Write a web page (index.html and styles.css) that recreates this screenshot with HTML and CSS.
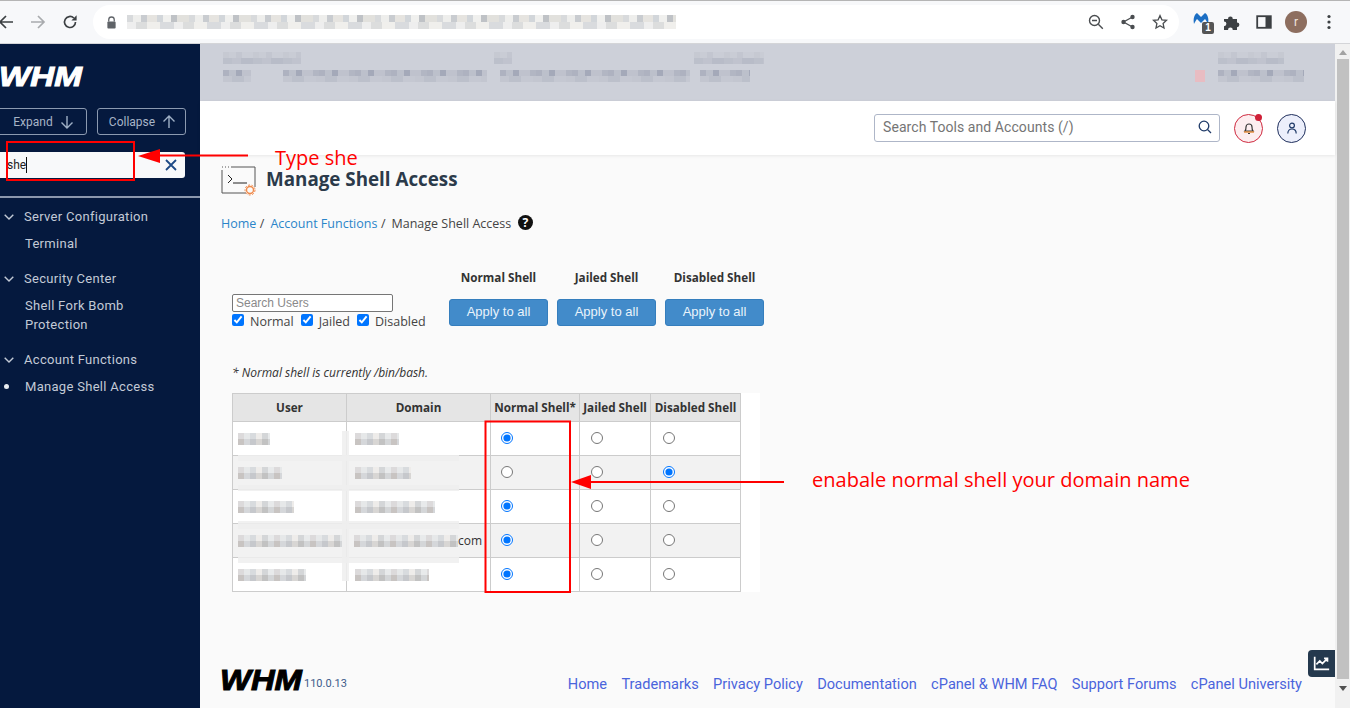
FILE: index.html
```html
<!DOCTYPE html>
<html lang="en">
<head>
<meta charset="UTF-8">
<title>Manage Shell Access</title>
<link rel="stylesheet" href="styles.css">
</head>
<body>
<div id="browserBar">
    <svg class="navIcon first" viewBox="0 0 16 16"><path d="M15 8H2M8 2L2 8l6 6" fill="none" stroke="#3c4043" stroke-width="1.7"/></svg>
    <svg class="navIcon" viewBox="0 0 16 16"><path d="M1 8h13M8 2l6 6-6 6" fill="none" stroke="#a9abae" stroke-width="1.7"/></svg>
    <svg class="navIcon" viewBox="0 0 16 16"><path d="M13.5 8a5.5 5.5 0 1 1-1.7-4" fill="none" stroke="#3c4043" stroke-width="1.7"/><path d="M14.6 1.2v5.2H9.4z" fill="#3c4043"/></svg>
    <div id="addressBar">
        <svg class="lock" viewBox="0 0 12 14"><path d="M3 6V4a3 3 0 0 1 6 0v2" fill="none" stroke="#5f6368" stroke-width="1.4"/><rect x="1.5" y="6" width="9" height="7.5" rx="1" fill="#5f6368"/></svg>
        <div class="urlBlur"></div>
        <svg class="barIcon" viewBox="0 0 16 16"><circle cx="6.5" cy="6.5" r="5" fill="none" stroke="#4a4d50" stroke-width="1.4"/><path d="M4 6.5h5M10.3 10.3l4.5 4.5" stroke="#4a4d50" stroke-width="1.4"/></svg>
        <svg class="barIcon" viewBox="0 0 16 16"><path d="M12.5 3L3.5 8l9 5" fill="none" stroke="#4a4d50" stroke-width="1.3"/><circle cx="12.5" cy="3" r="2.2" fill="#4a4d50"/><circle cx="3.5" cy="8" r="2.2" fill="#4a4d50"/><circle cx="12.5" cy="13" r="2.2" fill="#4a4d50"/></svg>
        <svg class="barIcon" viewBox="0 0 16 16"><path d="M8 1.6l1.9 4.2 4.6.5-3.4 3.1.9 4.6L8 11.7l-4 2.3.9-4.6-3.4-3.1 4.6-.5z" fill="none" stroke="#4a4d50" stroke-width="1.3"/></svg>
    </div>
    <div id="extBox">
        <svg class="malware" viewBox="0 0 16 14"><path d="M1 12C0 7 1 3 4 1l4 4 4-4c3 2 4 6 3 11-1-2-2-4-3-5l-4 4-4-4c-1 1-2 3-3 5z" fill="#1c6fc4"/></svg>
        <span class="extBadge">1</span>
    </div>
    <svg class="extIcon" viewBox="0 0 16 16"><path d="M0 5h4a2.400 2.400 0 1 1 4.800 0H13v3.400a2.400 2.400 0 1 1 0 4.800V16H8.800a2.400 2.400 0 1 0-4.800 0H0v-3.800a2.400 2.400 0 1 0 0-4.800z" fill="#3c4043"/></svg>
    <svg class="extIcon" viewBox="0 0 16 16"><rect x="1.2" y="2.2" width="13.6" height="11.6" fill="none" stroke="#3c4043" stroke-width="1.8"/><rect x="9.5" y="2.2" width="5.3" height="11.6" fill="#3c4043"/></svg>
    <span class="avatar">r</span>
    <svg class="extIcon" viewBox="0 0 16 16"><circle cx="8" cy="2.5" r="1.6" fill="#3c4043"/><circle cx="8" cy="8" r="1.6" fill="#3c4043"/><circle cx="8" cy="13.5" r="1.6" fill="#3c4043"/></svg>
</div>

<div id="page">
    <div id="sidebar">
        <div class="logo">WHM</div>
        <div class="btnRow">
            <button class="sideBtn expand">Expand
                <svg viewBox="0 0 14 14"><path d="M7 1v12M1.5 7.5L7 13l5.500-5.500" fill="none" stroke="#9fb0c6" stroke-width="1.4"/></svg>
            </button>
            <button class="sideBtn collapse">Collapse
                <svg viewBox="0 0 14 14"><path d="M7 13V1M1.5 6.5L7 1l5.500 5.500" fill="none" stroke="#9fb0c6" stroke-width="1.4"/></svg>
            </button>
        </div>
        <div class="sideSearch">
            <span class="sideValue">she</span>
            <svg viewBox="0 0 12 12"><path d="M1 1l10 10M11 1L1 11" stroke="#1d4a86" stroke-width="1.8"/></svg>
        </div>
        <ul class="sideNav">
            <li class="navHead"><svg viewBox="0 0 10 6"><path d="M.7.7L5 5 9.3.7" fill="none" stroke="#c3cad6" stroke-width="1.4"/></svg>Server Configuration</li>
            <li class="navItem">Terminal</li>
            <li class="navHead"><svg viewBox="0 0 10 6"><path d="M.7.7L5 5 9.3.7" fill="none" stroke="#c3cad6" stroke-width="1.4"/></svg>Security Center</li>
            <li class="navItem">Shell Fork Bomb Protection</li>
            <li class="navHead"><svg viewBox="0 0 10 6"><path d="M.7.7L5 5 9.3.7" fill="none" stroke="#c3cad6" stroke-width="1.4"/></svg>Account Functions</li>
            <li class="navItem active">Manage Shell Access</li>
        </ul>
    </div>

    <div id="main">
        <div id="infoBand">
            <div class="infoGroup g1">
                <div class="blur dim b78"></div>
                <div class="infoRow"><div class="blur b28"></div><div class="blur b204"></div></div>
            </div>
            <div class="infoGroup g2">
                <div class="blur dim b18"></div>
                <div class="blur b190 shift6"></div>
            </div>
            <div class="infoGroup g3">
                <div class="blur dim b70"></div>
                <div class="blur b50 shift6"></div>
            </div>
            <div class="infoGroup g4">
                <div class="blur dim b66 shift23"></div>
                <div class="infoRow"><div class="pinkDot"></div><div class="blur b86"></div></div>
            </div>
        </div>
        <div id="topBar">
            <div class="topSearch">
                <span>Search Tools and Accounts (/)</span>
                <svg viewBox="0 0 14 14"><circle cx="6" cy="6" r="4.8" fill="none" stroke="#1f3a68" stroke-width="1.3"/><path d="M9.5 9.5L13 13" stroke="#1f3a68" stroke-width="1.3"/></svg>
            </div>
            <div class="roundBtn bell">
                <svg viewBox="0 0 14 14"><path d="M3 10c1-1 1-2 1-4a3 3 0 0 1 6 0c0 2 0 3 1 4z" fill="none" stroke="#3a3a3a" stroke-width="1.2"/><path d="M2 11h10" stroke="#e07b1a" stroke-width="1.2"/><path d="M6 12.5h2" stroke="#3a3a3a" stroke-width="1.2"/></svg>
                <span class="redDot"></span>
            </div>
            <div class="roundBtn user">
                <svg viewBox="0 0 14 14"><circle cx="7" cy="4.5" r="2.4" fill="none" stroke="#1f3a68" stroke-width="1.2"/><path d="M2.8 12.5c0-3 1.800-4.500 4.200-4.500s4.200 1.500 4.200 4.500" fill="none" stroke="#1f3a68" stroke-width="1.2"/></svg>
            </div>
        </div>

        <div id="content">
            <div class="titleRow">
                <svg class="titleIcon" viewBox="0 0 36 32">
                    <path d="M1 3h1M4 3h1M7 3h1M10 3h24v20M1 6v23h24" fill="none" stroke="#555" stroke-width="1"/>
                    <path d="M7 11l4 4-4 4M12 19h14" fill="none" stroke="#222" stroke-width="1"/>
                    <circle cx="29" cy="26" r="3.500" fill="none" stroke="#f08a4b" stroke-width="1.400"/>
                    <circle cx="29" cy="26" r="5" fill="none" stroke="#f08a4b" stroke-width="1" stroke-dasharray="2 1.500"/>
                </svg>
                <h1>Manage Shell Access</h1>
            </div>
            <div class="crumbs">
                <a>Home</a><span class="sep">/</span><a>Account Functions</a><span class="sep">/</span><span>Manage Shell Access</span>
                <svg class="helpIcon" viewBox="0 0 16 16"><circle cx="8" cy="8" r="8" fill="#111"/><text x="8" y="12.800" text-anchor="middle" class="helpMark">?</text></svg>
            </div>

            <div class="controls">
                <div class="filterBox">
                    <input class="userSearch" type="text" placeholder="Search Users">
                    <div class="filterChecks">
                        <label><input type="checkbox" checked>Normal</label>
                        <label><input type="checkbox" checked>Jailed</label>
                        <label><input type="checkbox" checked>Disabled</label>
                    </div>
                </div>
                <div class="applyCol"><b>Normal Shell</b><button class="applyBtn">Apply to all</button></div>
                <div class="applyCol"><b>Jailed Shell</b><button class="applyBtn">Apply to all</button></div>
                <div class="applyCol"><b>Disabled Shell</b><button class="applyBtn">Apply to all</button></div>
            </div>

            <p class="note">* Normal shell is currently /bin/bash.</p>

            <div class="tableWrap">
                <table class="shellTable">
                    <thead>
                        <tr><th class="colUser">User</th><th class="colDomain">Domain</th><th class="colNormal">Normal Shell*</th><th class="colJailed">Jailed Shell</th><th class="colDisabled">Disabled Shell</th></tr>
                    </thead>
                    <tbody>
                        <tr>
                            <td><div class="blur cell b32"></div></td>
                            <td class="dom"><div class="blur cell b44"></div></td>
                            <td class="rNormal"><input type="radio" name="r1" checked></td>
                            <td class="rJailed"><input type="radio" name="r1"></td>
                            <td class="rDisabled"><input type="radio" name="r1"></td>
                        </tr>
                        <tr>
                            <td><div class="blur cell b44"></div></td>
                            <td class="dom"><div class="blur cell b56"></div></td>
                            <td class="rNormal"><input type="radio" name="r2"></td>
                            <td class="rJailed"><input type="radio" name="r2"></td>
                            <td class="rDisabled"><input type="radio" name="r2" checked></td>
                        </tr>
                        <tr>
                            <td><div class="blur cell b56"></div></td>
                            <td class="dom"><div class="blur cell b80"></div></td>
                            <td class="rNormal"><input type="radio" name="r3" checked></td>
                            <td class="rJailed"><input type="radio" name="r3"></td>
                            <td class="rDisabled"><input type="radio" name="r3"></td>
                        </tr>
                        <tr>
                            <td><div class="blur cell b104"></div></td>
                            <td class="dom"><div class="domWrap"><div class="blur cell b104"></div><span>com</span></div></td>
                            <td class="rNormal"><input type="radio" name="r4" checked></td>
                            <td class="rJailed"><input type="radio" name="r4"></td>
                            <td class="rDisabled"><input type="radio" name="r4"></td>
                        </tr>
                        <tr>
                            <td><div class="blur cell b68"></div></td>
                            <td class="dom"><div class="blur cell b74"></div></td>
                            <td class="rNormal"><input type="radio" name="r5" checked></td>
                            <td class="rJailed"><input type="radio" name="r5"></td>
                            <td class="rDisabled"><input type="radio" name="r5"></td>
                        </tr>
                    </tbody>
                </table>
                <div class="smear h1"></div>
                <div class="smear h2"></div>
                <div class="smear h3"></div>
                <div class="smear h4"></div>
                <div class="smear v1"></div>
            </div>

            <div id="footer">
                <div class="footLogo"><span class="logoDark">WHM</span><span class="version">110.0.13</span></div>
                <div class="footLinks">
                    <a>Home</a><a>Trademarks</a><a>Privacy Policy</a><a>Documentation</a><a>cPanel &amp; WHM FAQ</a><a>Support Forums</a><a>cPanel University</a>
                </div>
            </div>
            <div class="statBtn">
                <svg viewBox="0 0 20 18"><path d="M2 1v15h17" fill="none" stroke="#fff" stroke-width="2"/><path d="M4 10l4-4 3 3 6-6M13 3h4v4" fill="none" stroke="#fff" stroke-width="2"/></svg>
            </div>
        </div>
    </div>

    <div id="scrollbar">
        <span class="arrowUp"></span>
        <div class="thumb"></div>
        <span class="arrowDown"></span>
    </div>
</div>

<svg id="marks" viewBox="0 0 1350 708">
    <rect x="7" y="142" width="127" height="38" fill="none" stroke="#f00" stroke-width="2"/>
    <path d="M160 155.500H248" stroke="#f00" stroke-width="2"/>
    <path d="M138 156l22-7v14z" fill="#f00"/>
    <text x="275" y="165" class="markText">Type she</text>
    <rect x="485.500" y="421.500" width="84.500" height="170.500" fill="none" stroke="#f00" stroke-width="2"/>
    <path d="M590 482H784" stroke="#f00" stroke-width="2"/>
    <path d="M571 482l20-7v14z" fill="#f00"/>
    <text x="812" y="487" class="markText">enabale normal shell your domain name</text>
</svg>
</body>
</html>
```

FILE: styles.css
```css
*{
    box-sizing: border-box;
}
html, body{
    margin: 0;
    padding: 0;
    height: 708px;
    overflow: hidden;
    background-color: #fafafa;
}
body{
    font-family: "Open Sans", sans-serif;
    position: relative;
}

/* browser chrome */
#browserBar{
    height: 44px;
    background-color: #f7f8fa;
    border-top: 1px solid #b5b5b5;
    border-bottom: 1px solid #d4d5d8;
    display: flex;
    align-items: center;
}
.navIcon{
    width: 16px;
    height: 16px;
    margin-right: 16px;
    flex-shrink: 0;
}
.navIcon.first{
    margin-left: -2px;
}
.navIcon + .navIcon + .navIcon{
    margin-right: 15px;
}
#addressBar{
    width: 1086px;
    height: 34px;
    background-color: #fff;
    border-radius: 17px;
    display: flex;
    align-items: center;
    padding-left: 13px;
    flex-shrink: 0;
}
.lock{
    width: 11px;
    height: 13px;
    margin-right: 10px;
    flex-shrink: 0;
}
.urlBlur{
    width: 549px;
    height: 14px;
    margin-right: 412px;
    flex-shrink: 0;
    background-image:
        repeating-linear-gradient(90deg, #d8dadc 0 6px, #eeeeec 6px 14px, #c9ccd0 14px 20px, #e6e4e0 20px 30px, #d2d6da 30px 36px, #f0f0ee 36px 44px, #bfc2c6 44px 50px, #e2e1dd 50px 62px),
        repeating-linear-gradient(90deg, #eeeeee 0 9px, #dcdddd 9px 20px, #f0efec 20px 33px, #d9dbde 33px 47px);
    background-size: 100% 7px, 100% 7px;
    background-position: 0 0, 0 7px;
    background-repeat: no-repeat;
}
.barIcon{
    width: 16px;
    height: 16px;
    margin-right: 16px;
    flex-shrink: 0;
}
#extBox{
    position: relative;
    width: 24px;
    height: 24px;
    margin-left: 14px;
    margin-right: 4px;
    flex-shrink: 0;
}
.malware{
    width: 16px;
    height: 14px;
    position: absolute;
    top: 2px;
    left: 0;
}
.extBadge{
    position: absolute;
    left: 9px;
    top: 12px;
    width: 12px;
    height: 12px;
    background-color: #555;
    color: #fff;
    border-radius: 2px;
    font: bold 10px/12px "Liberation Sans", sans-serif;
    text-align: center;
}
.extIcon{
    width: 16px;
    height: 16px;
    margin-left: 3px;
    margin-right: 13px;
    flex-shrink: 0;
}
.avatar{
    width: 22px;
    height: 22px;
    border-radius: 50%;
    background-color: #8d6e5f;
    color: #f1e6e0;
    font: 12px/22px "Roboto", sans-serif;
    text-align: center;
    margin-right: 11px;
    flex-shrink: 0;
}

#page{
    height: 664px;
    display: flex;
}

/* left menu */
#sidebar{
    width: 200px;
    flex-shrink: 0;
    background-color: #05193e;
    color: #c3cad6;
    font-family: "Roboto", sans-serif;
}
.logo{
    font: italic 900 27px/28px "Liberation Sans", sans-serif;
    color: #fff;
    -webkit-text-stroke: 1px #fff;
    transform: scaleX(1.230);
    transform-origin: left;
    margin: 19px 0 17px -1px;
    height: 28px;
}
.btnRow{
    display: flex;
    gap: 10px;
    margin-left: -10px;
}
.sideBtn{
    height: 27px;
    background: transparent;
    border: 1px solid #8c9ab0;
    border-radius: 3px;
    color: #a7b4c6;
    font: 12px "Roboto", sans-serif;
    display: flex;
    align-items: center;
    justify-content: center;
    gap: 7px;
    padding: 0;
}
.sideBtn svg{
    width: 14px;
    height: 14px;
}
.expand{
    width: 97px;
    padding-left: 10px;
}
.collapse{
    width: 89px;
    padding-left: 2px;
}
.sideSearch{
    width: 185px;
    height: 26px;
    margin-top: 17px;
    background-color: #f8f9fa;
    border-radius: 0 3px 3px 0;
    display: flex;
    align-items: center;
    justify-content: space-between;
    padding: 0 8px 0 7px;
}
.sideValue{
    color: #222;
    font: 12px "Roboto", sans-serif;
    border-right: 1px solid #111;
    line-height: 16px;
    padding-right: 0;
}
.sideSearch svg{
    width: 12px;
    height: 12px;
}
.sideNav{
    list-style: none;
    margin: 18px 0 0;
    padding: 9px 20px 0 0;
    border-top: 2px solid #8b97ad;
    font-size: 13px;
    letter-spacing: 0.3px;
}
.navHead{
    display: flex;
    align-items: center;
    height: 19px;
    padding-left: 4px;
}
.navHead svg{
    width: 10px;
    height: 6px;
    margin-right: 10px;
}
.navItem{
    padding-left: 25px;
    line-height: 19px;
    margin: 8px 0 16px;
    position: relative;
}
.navItem.active::before{
    content: "";
    position: absolute;
    left: 4px;
    top: 7px;
    width: 5px;
    height: 5px;
    border-radius: 50%;
    background-color: #e8ebf0;
}

/* main column */
#main{
    flex: 1;
    min-width: 0;
    display: flex;
    flex-direction: column;
}
#infoBand{
    height: 57px;
    background-color: #cdd0d9;
    display: flex;
    padding: 8px 0 0 23px;
}
.infoGroup{
    display: flex;
    flex-direction: column;
    gap: 6px;
}
.infoRow{
    display: flex;
    gap: 32px;
}
.g1{
    width: 271px;
}
.g2{
    width: 200px;
}
.g3{
    width: 501px;
}
.g4{
    width: 130px;
}
.g4 .infoRow{
    gap: 13px;
}
.shift6{
    margin-left: 6px;
}
.shift23{
    margin-left: 23px;
}
.pinkDot{
    width: 10px;
    height: 12px;
    background-color: #e8bcc2;
}
.blur{
    height: 12px;
    background-image:
        repeating-linear-gradient(90deg, #aeb2c0 0 6px, #bcc0cb 6px 13px, #a4a9b9 13px 19px, #bfc2cd 19px 30px, #b2b6c3 30px 36px),
        repeating-linear-gradient(90deg, #c3c6d0 0 9px, #bcc0cb 9px 21px, #c5c8d2 21px 33px);
    background-size: 100% 6px, 100% 6px;
    background-position: 0 0, 0 6px;
    background-repeat: no-repeat;
}
.blur.dim{
    background-image:
        repeating-linear-gradient(90deg, #c6c9d2 0 6px, #c9ccd5 6px 13px, #c3c6d0 13px 19px, #cacdd6 19px 30px),
        repeating-linear-gradient(90deg, #bcc0cb 0 9px, #c0c3ce 9px 18px, #b8bcc8 18px 30px);
}
.blur.cell{
    background-image:
        repeating-linear-gradient(90deg, #dcdadb 0 6px, #e6e8e9 6px 12px, #d8dbde 12px 18px, #eeecea 18px 24px, #d4d6d8 24px 30px, #e8eaeb 30px 36px),
        repeating-linear-gradient(90deg, #c8c4c2 0 6px, #d5d7da 6px 12px, #c6c8cc 12px 18px, #d8d6d4 18px 24px, #c2c2c2 24px 30px, #d4d6d8 30px 36px);
}
.b18{ width: 18px; }
.b28{ width: 28px; }
.b32{ width: 32px; }
.b44{ width: 44px; }
.b50{ width: 50px; }
.b56{ width: 56px; }
.b66{ width: 66px; }
.b68{ width: 68px; }
.b70{ width: 70px; }
.b74{ width: 74px; }
.b78{ width: 78px; }
.b80{ width: 80px; }
.b86{ width: 86px; }
.b104{ width: 104px; }
.b190{ width: 190px; }
.b204{ width: 204px; }

#topBar{
    height: 54px;
    background-color: #fff;
    box-shadow: 0 1px 3px rgba(0,0,0,0.08);
    display: flex;
    align-items: center;
    justify-content: flex-end;
    padding-right: 29px;
    flex-shrink: 0;
    position: relative;
}
.topSearch{
    width: 346px;
    height: 28px;
    border: 1px solid #aeb6c8;
    border-radius: 3px;
    display: flex;
    align-items: center;
    justify-content: space-between;
    padding: 0 7px 2px 8px;
    font: 14px "Roboto", sans-serif;
    letter-spacing: 0.07px;
    color: #757575;
    margin-right: 14px;
}
.topSearch svg{
    width: 14px;
    height: 14px;
}
.roundBtn{
    width: 29px;
    height: 29px;
    border-radius: 50%;
    display: flex;
    align-items: center;
    justify-content: center;
    position: relative;
}
.roundBtn svg{
    width: 14px;
    height: 14px;
}
.bell{
    background-color: #fdeef0;
    border: 1px solid #cf2a3f;
    margin-right: 14px;
}
.user{
    background-color: #eceffb;
    border: 1px solid #1f2f5c;
}
.redDot{
    position: absolute;
    top: -1px;
    right: 0;
    width: 7px;
    height: 7px;
    border-radius: 50%;
    background-color: #cf1f37;
}

/* page content */
#content{
    flex: 1;
    padding-left: 21px;
    position: relative;
    min-height: 0;
}
.titleRow{
    display: flex;
    align-items: center;
    height: 32px;
    margin-top: 8px;
}
.titleIcon{
    width: 36px;
    height: 32px;
    margin-right: 9px;
    margin-top: 2px;
}
h1{
    margin: 0;
    font-size: 18.800px;
    font-weight: 700;
    color: #2b3a4a;
}
.crumbs{
    display: flex;
    align-items: center;
    font-size: 12.500px;
    color: #444;
    margin-top: 18px;
    height: 20px;
}
.crumbs a{
    color: #2a85c9;
}
.sep{
    margin: 0 6px 0 3.500px;
}
.helpIcon{
    width: 15px;
    height: 15px;
    margin-left: 7px;
    margin-top: -1px;
}
.helpMark{
    font: bold 13px "Open Sans", sans-serif;
    fill: #fff;
}
.controls{
    display: flex;
    align-items: flex-start;
    margin: 36px 0 0 11px;
}
.filterBox{
    width: 217px;
    padding-top: 25px;
}
.userSearch{
    display: block;
    width: 161px;
    height: 18px;
    border: 1px solid #767676;
    border-radius: 2px;
    padding: 0 3px;
    font: 12px "Liberation Sans", sans-serif;
    background-color: #fff;
}
.userSearch::placeholder{
    color: #8a8a8a;
}
.filterChecks{
    display: flex;
    gap: 7px;
    font-size: 12.500px;
    color: #444;
    margin-top: 1px;
    line-height: 18px;
}
.filterChecks input{
    margin: 0 6px 0 0;
    vertical-align: 0;
    width: 12px;
    height: 12px;
}
.applyCol{
    width: 99px;
    margin-right: 9px;
    text-align: center;
    font-size: 11.700px;
    color: #333;
}
.applyCol b{
    display: block;
    line-height: 17px;
    margin-bottom: 13px;
}
.applyBtn{
    width: 99px;
    height: 27px;
    padding: 0 0 2px;
    background-color: #428bca;
    border: 1px solid #357ebd;
    border-radius: 3px;
    color: #eaf3fb;
    font: 13px "Liberation Sans", sans-serif;
}
.note{
    margin: 33px 0 0 11px;
    font-size: 12px;
    font-style: italic;
    color: #333;
    line-height: 17px;
}
.tableWrap{
    margin: 12px 0 0 11px;
    width: 528px;
    height: 199px;
    background-color: #fff;
    position: relative;
}
.shellTable{
    border-collapse: collapse;
    table-layout: fixed;
    width: 508px;
    font-size: 11.700px;
    color: #333;
}
.shellTable th{
    height: 28px;
    background-color: #e5e5e5;
    border: 1px solid #ccc;
    padding: 0 0 2px;
    text-align: center;
}
.shellTable td{
    height: 34px;
    border: 1px solid #ccc;
    padding: 0 0 0 5px;
}
.shellTable tbody tr:nth-child(even){
    background-color: #f2f2f2;
}
.colUser{ width: 114px; }
.colDomain{ width: 144px; }
.colNormal{ width: 89px; }
.colJailed{ width: 71px; }
.colDisabled{ width: 90px; }
.shellTable td.dom{
    padding-left: 8px;
}
.domWrap{
    display: flex;
    align-items: center;
    font-size: 12px;
    line-height: 12px;
    margin-left: -1px;
}
.shellTable td.rNormal{ padding-left: 10px; }
.shellTable td.rJailed{ padding-left: 11px; }
.shellTable td.rDisabled{ padding-left: 12px; }
.shellTable input[type=radio]{
    margin: -2px 0 0;
    display: block;
    width: 12px;
    height: 12px;
}
.smear{
    position: absolute;
    background-color: rgba(238,238,238,0.85);
}
.smear.h1, .smear.h2, .smear.h3, .smear.h4{
    left: 6px;
    width: 221px;
    height: 6px;
}
.smear.h1{ top: 62px; }
.smear.h2{ top: 92px; }
.smear.h3{ top: 128px; height: 8px; }
.smear.h4{ top: 164px; }
.smear.v1{
    left: 110px;
    top: 38px;
    width: 7px;
    height: 150px;
}

/* footer */
#footer{
    position: absolute;
    left: 20px;
    right: 33px;
    bottom: 14px;
    display: flex;
    justify-content: space-between;
    align-items: flex-end;
}
.footLogo{
    display: flex;
    align-items: flex-end;
    gap: 3px;
}
.logoDark{
    font: italic 900 29px/28px "Liberation Sans", sans-serif;
    color: #000;
    -webkit-text-stroke: 1px #000;
    transform: scaleX(1.130);
    transform-origin: left;
    width: 81px;
}
.version{
    font: 11px/20px "Roboto", sans-serif;
    color: #3d5a8a;
}
.footLinks{
    display: flex;
    gap: 14.300px;
    font: 14.600px/20px "Roboto", sans-serif;
    color: #4a64dc;
}
.statBtn{
    position: absolute;
    right: 0;
    bottom: 31px;
    width: 27px;
    height: 27px;
    background-color: #24394e;
    border-radius: 4px 0 0 4px;
    padding: 5px;
}
.statBtn svg{
    display: block;
    width: 100%;
    height: 100%;
}

/* scrollbar */
#scrollbar{
    width: 15px;
    flex-shrink: 0;
    background-color: #f1f1f1;
    display: flex;
    flex-direction: column;
    align-items: center;
    padding-top: 6px;
}
.arrowUp{
    border: 4px solid transparent;
    border-top: 0;
    border-bottom: 5px solid #a3a3a3;
}
.arrowDown{
    border: 4px solid transparent;
    border-bottom: 0;
    border-top: 5px solid #505050;
    margin-top: 7px;
}
.thumb{
    width: 12px;
    height: 620px;
    margin-top: 4px;
    background-color: #c1c1c1;
}

/* red notes drawn on the shot */
#marks{
    position: absolute;
    left: 0;
    top: 0;
    width: 1350px;
    height: 708px;
    pointer-events: none;
}
.markText{
    font: 20.050px "Open Sans", sans-serif;
    fill: #f00;
}
```
